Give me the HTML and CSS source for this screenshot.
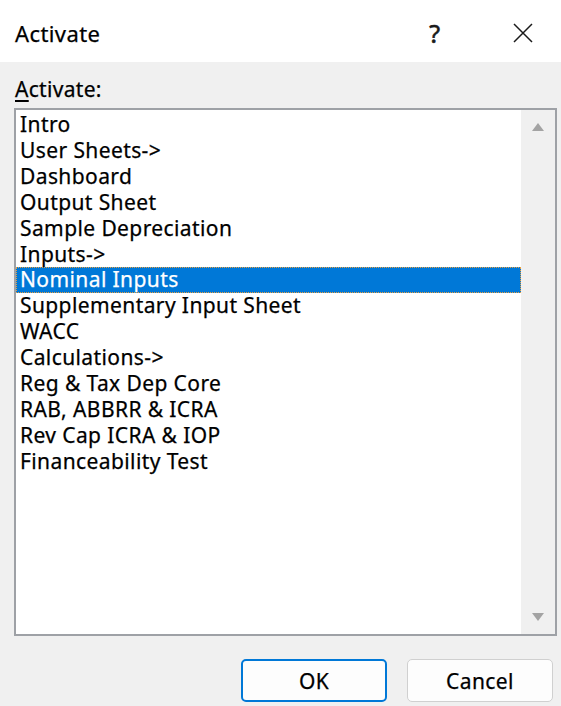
FILE: index.html
```html
<!DOCTYPE html>
<html lang="en">
<head>
<meta charset="utf-8">
<title>Activate</title>
<link rel="stylesheet" href="styles.css">
</head>
<body>
<div class="dialog">
  <header class="titlebar">
    <span class="title">Activate</span>
    <span class="help">?</span>
    <span class="close">
      <svg width="22" height="22" viewBox="0 0 22 22"><path d="M2 2 L20 20 M20 2 L2 20" stroke="#1a1a1a" stroke-width="1.5" fill="none"/></svg>
    </span>
  </header>
  <main class="content">
    <label class="field-label"><u>A</u>ctivate:</label>
    <div class="listbox">
      <ul class="items">
        <li>Intro</li>
        <li>User Sheets-&gt;</li>
        <li>Dashboard</li>
        <li>Output Sheet</li>
        <li>Sample Depreciation</li>
        <li>Inputs-&gt;</li>
        <li class="selected">Nominal Inputs</li>
        <li>Supplementary Input Sheet</li>
        <li>WACC</li>
        <li>Calculations-&gt;</li>
        <li>Reg &amp; Tax Dep Core</li>
        <li>RAB, ABBRR &amp; ICRA</li>
        <li>Rev Cap ICRA &amp; IOP</li>
        <li>Financeability Test</li>
      </ul>
      <div class="scrollbar">
        <svg class="arrow" width="14" height="10" viewBox="0 0 14 10"><path d="M7 1 L13 9 L1 9 Z" fill="#a3a3a3"/></svg>
        <svg class="arrow" width="14" height="10" viewBox="0 0 14 10"><path d="M1 1 L13 1 L7 9 Z" fill="#a3a3a3"/></svg>
      </div>
    </div>
    <div class="actions">
      <button class="btn btn-default">OK</button>
      <button class="btn">Cancel</button>
    </div>
  </main>
</div>
</body>
</html>
```

FILE: styles.css
```css
html, body {
  margin: 0;
  padding: 0;
}

body {
  width: 561px;
  height: 706px;
  overflow: hidden;
  background: #f0f0f0;
  font-family: "Noto Sans", "Open Sans", sans-serif;
  color: #000;
  -webkit-text-stroke: 0.25px currentColor;
}

.dialog {
  display: flex;
  flex-direction: column;
  height: 706px;
}

/* white caption strip with title, help and close glyphs */
.titlebar {
  height: 62px;
  background: #fff;
  display: flex;
  align-items: center;
  padding: 3px 27px 0 15px;
  box-sizing: border-box;
}

.title {
  font-size: 22px;
  letter-spacing: 0.4px;
  flex: 1;
}

.help {
  font-size: 25px;
  margin-right: 72px;
  color: #1a1a1a;
  -webkit-text-stroke: 0.6px #1a1a1a;
}

.close {
  display: flex;
  width: 22px;
  height: 22px;
}

.content {
  flex: 1;
  display: flex;
  flex-direction: column;
  padding: 15px 4px 0 14px;
}

.field-label {
  font-size: 21px;
  letter-spacing: 0.3px;
  line-height: 25px;
  padding-left: 1px;
}

.field-label u {
  text-underline-offset: 3px;
}

.listbox {
  margin-top: 6px;
  height: 528px;
  box-sizing: border-box;
  border: 2px solid #9ea1a6;
  background: #fff;
  display: flex;
}

.items {
  list-style: none;
  margin: 0;
  padding: 2px 0 0 0;
  flex: 1;
  font-size: 21px;
  letter-spacing: 0.4px;
  line-height: 25.9px;
}

.items li {
  padding-left: 4px;
  white-space: nowrap;
}

.items li.selected {
  background: #0078d7;
  color: #fff;
  outline: 1px dotted #e8a040;
  outline-offset: -1px;
}

.scrollbar {
  width: 34px;
  background: #f0f0f0;
  display: flex;
  flex-direction: column;
  justify-content: space-between;
  align-items: center;
  padding: 12px 0 12px;
  box-sizing: border-box;
}

.arrow {
  display: block;
}

.actions {
  display: flex;
  justify-content: flex-end;
  gap: 20px;
  margin-top: 23px;
  padding-right: 4px;
}

.btn {
  width: 146px;
  height: 43px;
  box-sizing: border-box;
  font-family: inherit;
  font-size: 21px;
  letter-spacing: 0.4px;
  color: #000;
  background: #fdfdfd;
  border: 1px solid #d0d0d0;
  border-radius: 5px;
  -webkit-text-stroke: 0.25px #000;
}

.btn-default {
  border: 2px solid #0078d7;
}
```
